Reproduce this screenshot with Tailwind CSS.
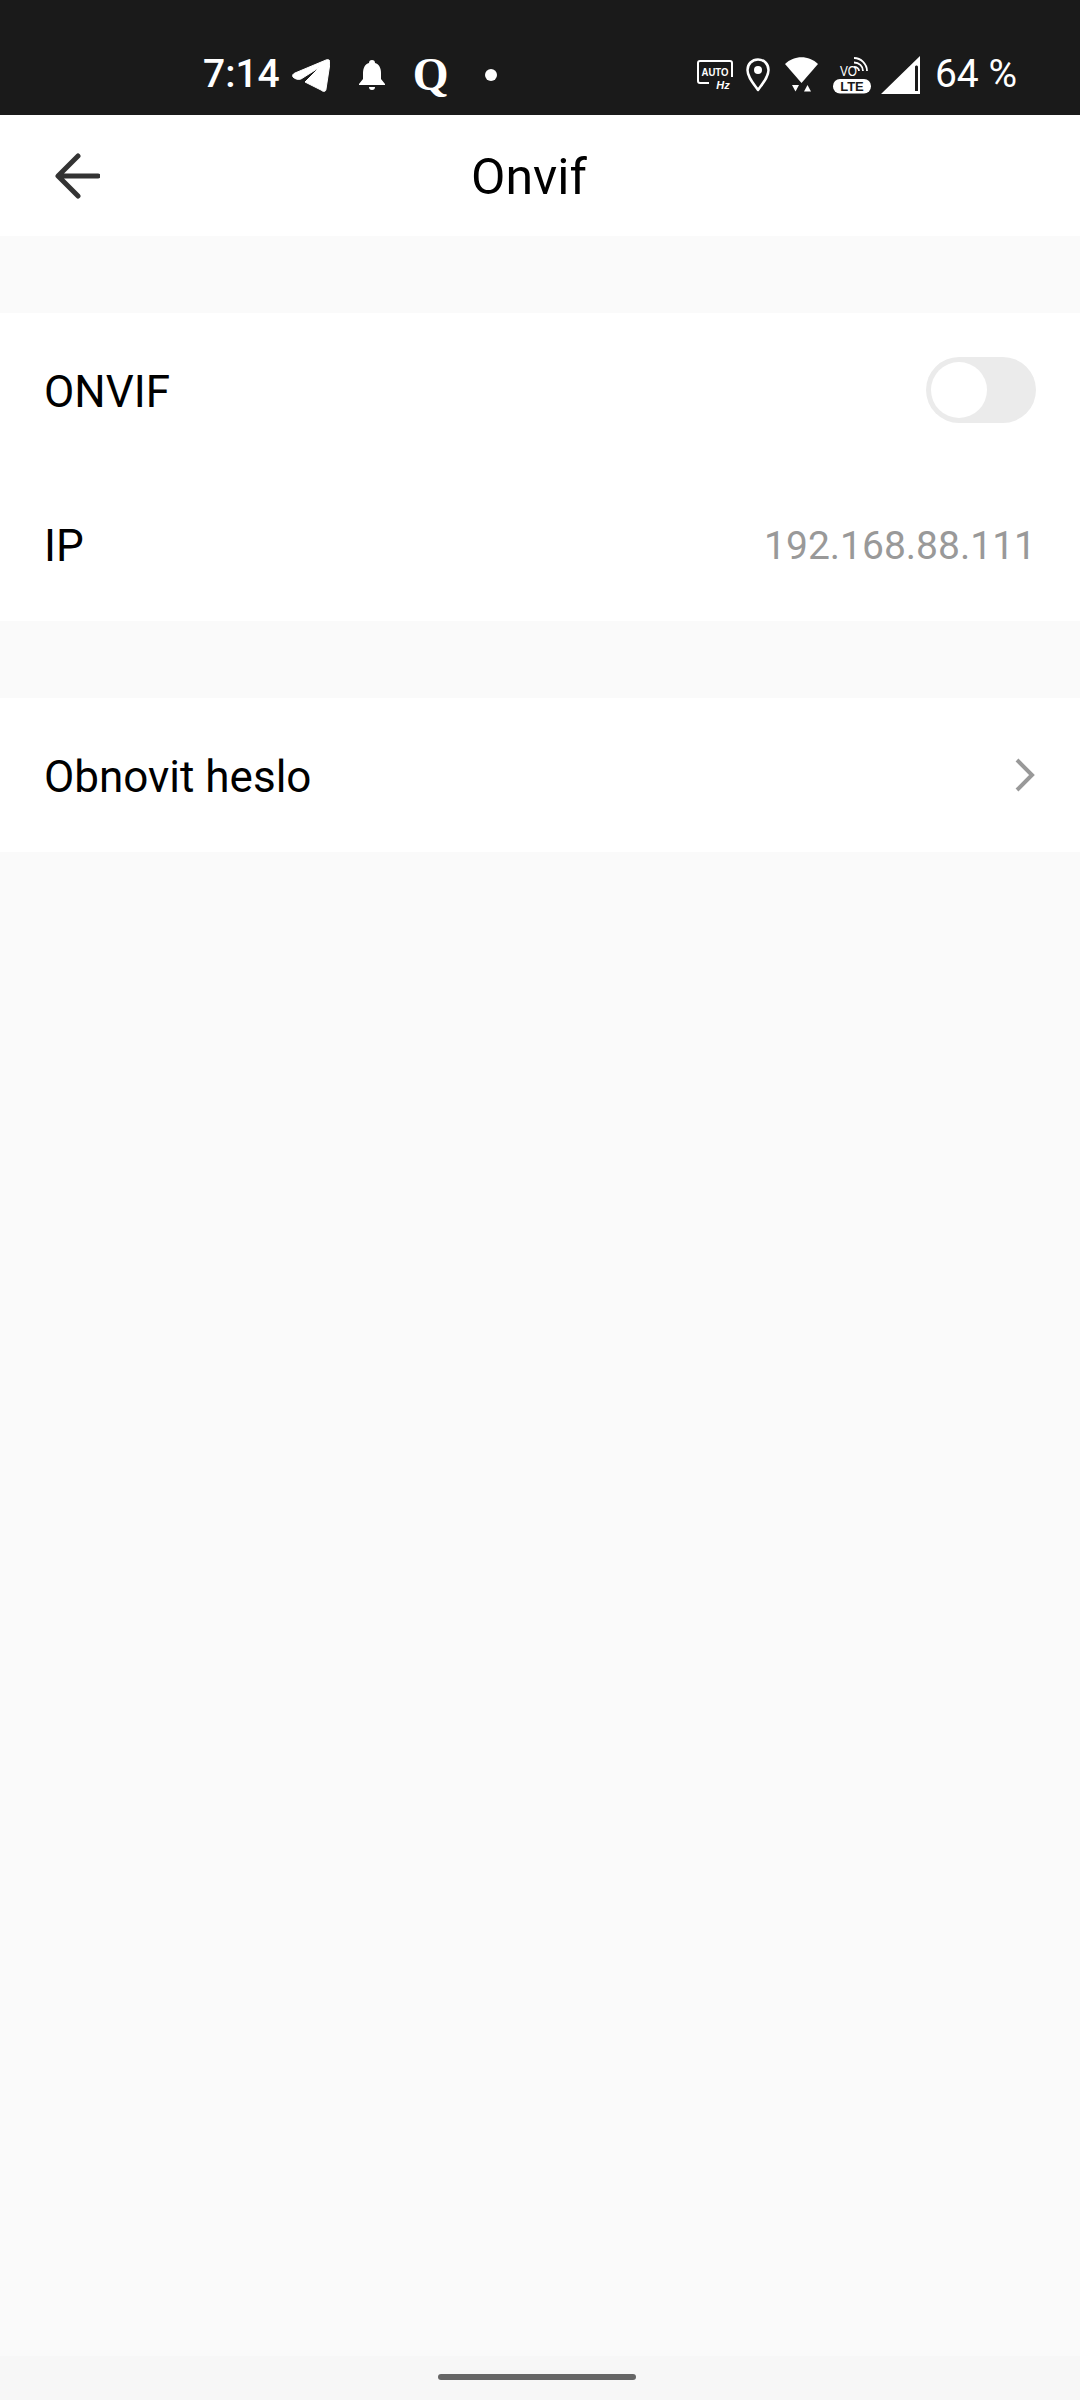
<!DOCTYPE html>
<html lang="cs">

<head>
    <meta charset="UTF-8">
    <meta name="viewport" content="width=device-width, initial-scale=1.0">
    <title>Onvif</title>
    <script src="https://cdn.jsdelivr.net/npm/@tailwindcss/browser@4"></script>
</head>

<body class="bg-[#fafafa] font-['Roboto',sans-serif]">
    <div class="w-[1080px] h-[2400px] flex flex-col overflow-hidden">

        <!-- Status bar -->
        <div class="h-[115px] bg-[#1a1a1a] text-white flex items-center justify-between pl-[203px] pr-[63px] pt-[42px] pb-[8px] shrink-0">
            <div class="flex items-center">
                <span class="text-[39px] leading-none font-medium">7:14</span>
                <svg class="ml-[12px] w-[38px] h-[34px]" viewBox="0 0 38 34" fill="#fff">
                    <path d="M1 19 C0 17 1 16 3 15 L34 2 C37 1 38 2 38 5 L34 31 C34 34 31 34 29 32 L13 24 L28 9 L9 21 C6 22 3 21 1 19 Z" stroke="#fff" stroke-width="1" stroke-linejoin="round"/>
                </svg>
                <svg class="ml-[29px] w-[26px] h-[30px]" viewBox="0 0 26 30" fill="#fff">
                    <path d="M13 0 C15 0 16 1 16 3 C20 4 22 8 22 13 L22 19 L26 24 L26 25 L0 25 L0 24 L4 19 L4 13 C4 8 6 4 10 3 C10 1 11 0 13 0 Z"/>
                    <path d="M10 27 L16 27 C16 29 15 30 13 30 C11 30 10 29 10 27 Z"/>
                </svg>
                <span class="ml-[28px] w-[34px] text-[46px] leading-[34px] font-bold font-['Liberation_Serif',serif]">Q</span>
                <span class="ml-[38px] w-[12px] h-[12px] rounded-full bg-white"></span>
            </div>
            <div class="flex items-center">
                <svg class="w-[36px] h-[30px]" viewBox="0 0 36 30" fill="none" stroke="#fff" stroke-width="2">
                    <path d="M12 23 L3 23 C2 23 1 22 1 21 L1 3 C1 2 2 1 3 1 L33 1 C34 1 35 2 35 3 L35 17"/>
                    <text x="18" y="16" font-family="Liberation Sans" font-size="11" font-weight="700" fill="#fff" stroke="none" text-anchor="middle" textLength="27" lengthAdjust="spacingAndGlyphs">AUTO</text>
                    <text x="26" y="29" font-family="Liberation Sans" font-size="11" font-weight="700" font-style="italic" fill="#fff" stroke="none" text-anchor="middle">Hz</text>
                </svg>
                <svg class="ml-[13px] w-[24px] h-[34px]" viewBox="0 0 24 34" fill="none">
                    <path d="M12 32 C7 25 1.500 19 1.500 12 C1.500 6 6 1.500 12 1.500 C18 1.500 22.500 6 22.500 12 C22.500 19 17 25 12 32 Z" stroke="#fff" stroke-width="2.500" stroke-linejoin="round"/>
                    <circle cx="12" cy="12" r="4" fill="#fff"/>
                </svg>
                <svg class="ml-[15px] w-[33px] h-[35px]" viewBox="0 0 33 35" fill="#fff">
                    <path d="M0 7 C9 -2 24 -2 33 7 L16.500 26 Z"/>
                    <path d="M7 28 L14 28 L10.500 34.500 Z"/>
                    <path d="M19 34.500 L26 34.500 L22.500 28 Z"/>
                </svg>
                <svg class="ml-[15px] w-[38px] h-[38px]" viewBox="0 0 38 38" fill="none">
                    <text x="7" y="20" font-family="Liberation Sans" font-size="15" fill="#fff" textLength="17" lengthAdjust="spacingAndGlyphs">VO</text>
                    <path d="M21 11 C24 11 26 13 26 15 M21 6.500 C26 6.500 30 10 30 15 M21 2 C28 2 34 8 34 15" stroke="#fff" stroke-width="1.800"/>
                    <rect x="0" y="23" width="38" height="14.500" rx="7" fill="#fff"/>
                    <text x="19" y="35" font-family="Liberation Sans" font-size="13" font-weight="700" fill="#1a1a1a" text-anchor="middle">LTE</text>
                </svg>
                <svg class="ml-[10px] w-[39px] h-[38px]" viewBox="0 0 39 38" fill="#fff">
                    <path fill-rule="evenodd" d="M39 0 L39 38 L0 38 L39 0 Z M34 11 L34 35 L37 35 L37 11 C37 9 34 9 34 11 Z"/>
                </svg>
                <span class="ml-[15px] text-[39px] leading-none whitespace-pre">64 %</span>
            </div>
        </div>

        <!-- Header -->
        <div class="relative h-[121px] bg-white flex items-center justify-center pt-[2px] pr-[22px] shrink-0">
            <svg class="absolute left-[55px] top-[38px] w-[45px] h-[46px]" viewBox="0 0 45 46" fill="none" stroke="#333" stroke-width="5" stroke-linecap="round" stroke-linejoin="round">
                <path d="M43 23 L4 23 M23 3 L3 23 L23 43"/>
            </svg>
            <span class="text-[50px] text-black leading-none">Onvif</span>
        </div>

        <!-- Settings -->
        <div class="mt-[77px] bg-white">
            <div class="h-[154px] px-[44px] flex items-center justify-between">
                <span class="text-[44px] text-black pt-[3px]">ONVIF</span>
                <div class="w-[110px] h-[66px] rounded-full bg-[#ebebeb] p-[5px]">
                    <div class="w-[56px] h-[56px] rounded-full bg-white"></div>
                </div>
            </div>
            <div class="h-[154px] px-[44px] flex items-center justify-between">
                <span class="text-[44px] text-black pt-[3px]">IP</span>
                <span class="text-[39px] text-[#999999] pt-[5px]">192.168.88.111</span>
            </div>
        </div>

        <div class="mt-[77px] bg-white h-[154px] px-[44px] flex items-center justify-between">
            <span class="text-[44px] text-black pt-[3px]">Obnovit heslo</span>
            <svg class="w-[22px] h-[36px]" viewBox="0 0 22 36" fill="none" stroke="#999" stroke-width="4">
                <path d="M3 3 L18 18 L3 33"/>
            </svg>
        </div>

        <div class="flex-1"></div>

        <!-- Gesture bar -->
        <div class="h-[44px] bg-[#f7f7f7] flex justify-center pt-[18px] pr-[6px] shrink-0">
            <div class="w-[198px] h-[6px] rounded-full bg-[#666666]"></div>
        </div>
    </div>
</body>

</html>
